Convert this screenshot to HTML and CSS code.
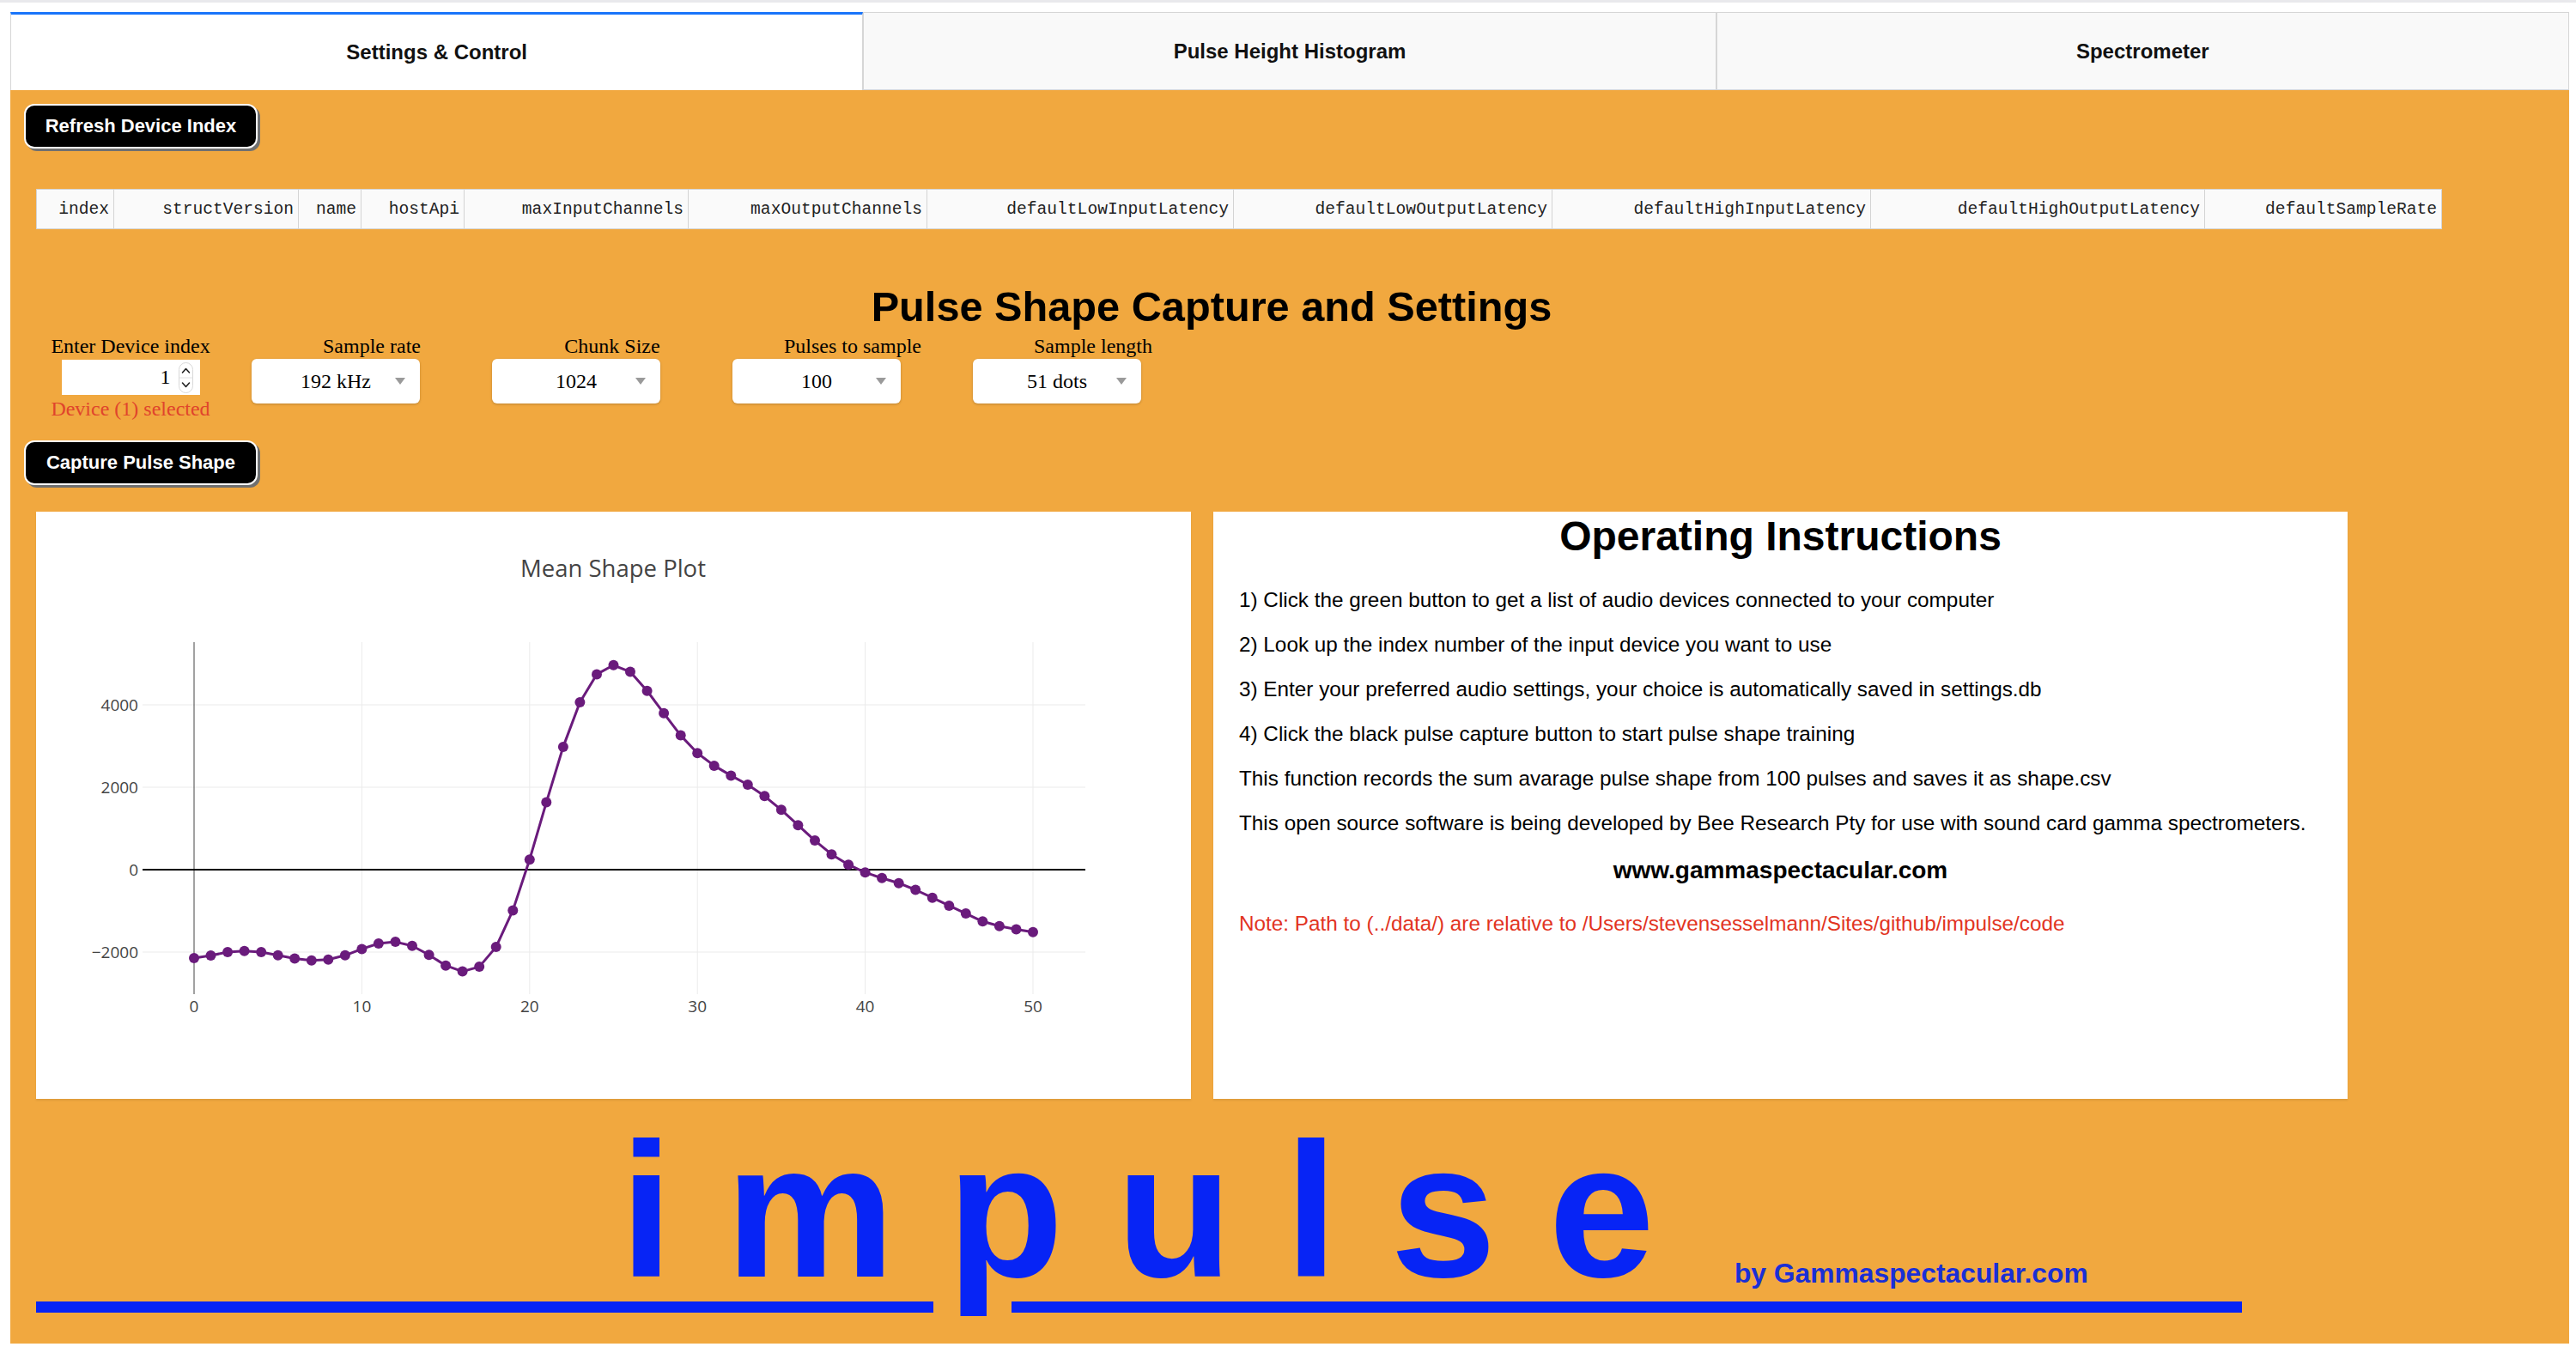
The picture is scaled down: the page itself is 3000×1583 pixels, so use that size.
FILE: index.html
```html
<!DOCTYPE html>
<html lang="en">
<head>
  <meta charset="UTF-8" />
  <meta name="viewport" content="width=device-width, initial-scale=1.0"/>
  <title>impulse</title>
  <link rel="stylesheet" href="styles.css">
</head>
<body>

  <!-- Tabs -->
  <div class="tabs">
    <div class="tab active">Settings &amp; Control</div>
    <div class="tab">Pulse Height Histogram</div>
    <div class="tab">Spectrometer</div>
  </div>

  <div class="tab-content">
    <button class="btn">Refresh Device Index</button>

    <!-- Device table -->
    <table class="device-table">
      <tr>
        <th class="c-index">index</th>
        <th class="c-struct">structVersion</th>
        <th class="c-name">name</th>
        <th class="c-host">hostApi</th>
        <th class="c-maxin">maxInputChannels</th>
        <th class="c-maxout">maxOutputChannels</th>
        <th class="c-lowin">defaultLowInputLatency</th>
        <th class="c-lowout">defaultLowOutputLatency</th>
        <th class="c-highin">defaultHighInputLatency</th>
        <th class="c-highout">defaultHighOutputLatency</th>
        <th class="c-rate">defaultSampleRate</th>
      </tr>
    </table>

    <h1 class="section-title">Pulse Shape Capture and Settings</h1>

    <!-- Settings -->
    <div class="controls">
      <div class="control first">
        <label>Enter Device index</label>
        <div class="number-box">
          <span>1</span>
          <svg class="spinner" width="17" height="36" viewBox="0 0 17 36">
            <rect x="0.5" y="0.5" width="16" height="35" rx="8" fill="#fff" stroke="#d8d8d8"/>
            <line x1="1" y1="18" x2="16" y2="18" stroke="#e2e2e2"/>
            <polyline points="4.5,12 8.5,7.5 12.5,12" fill="none" stroke="#222" stroke-width="1.6" stroke-linecap="round" stroke-linejoin="round"/>
            <polyline points="4.5,24 8.5,28.5 12.5,24" fill="none" stroke="#222" stroke-width="1.6" stroke-linecap="round" stroke-linejoin="round"/>
          </svg>
        </div>
        <div class="device-msg">Device (1) selected</div>
      </div>
      <div class="control">
        <label>Sample rate</label>
        <div class="dropdown"><span>192 kHz</span><span class="arrow"></span></div>
      </div>
      <div class="control">
        <label>Chunk Size</label>
        <div class="dropdown"><span>1024</span><span class="arrow"></span></div>
      </div>
      <div class="control">
        <label>Pulses to sample</label>
        <div class="dropdown"><span>100</span><span class="arrow"></span></div>
      </div>
      <div class="control">
        <label>Sample length</label>
        <div class="dropdown"><span>51 dots</span><span class="arrow"></span></div>
      </div>
    </div>

    <button class="btn capture">Capture Pulse Shape</button>

    <div class="panels">
      <!-- Mean shape plot -->
      <div class="panel chart-panel">
        <svg class="chart" width="1345" height="684" viewBox="0 0 1345 684">
          <text class="chart-title" x="672" y="76" text-anchor="middle">Mean Shape Plot</text>

          <g stroke="#ebebeb" stroke-width="1">
            <line x1="379.4" y1="152" x2="379.4" y2="562"/>
            <line x1="574.8" y1="152" x2="574.8" y2="562"/>
            <line x1="770.2" y1="152" x2="770.2" y2="562"/>
            <line x1="965.6" y1="152" x2="965.6" y2="562"/>
            <line x1="1161" y1="152" x2="1161" y2="562"/>
            <line x1="124" y1="225" x2="1222" y2="225"/>
            <line x1="124" y1="321" x2="1222" y2="321"/>
            <line x1="124" y1="513" x2="1222" y2="513"/>
          </g>
          <line x1="184" y1="152" x2="184" y2="562" stroke="#444" stroke-width="1"/>
          <line x1="124" y1="417" x2="1222" y2="417" stroke="#000" stroke-width="2"/>

          <g class="tick" text-anchor="end">
            <text x="119" y="232">4000</text>
            <text x="119" y="328">2000</text>
            <text x="119" y="424">0</text>
            <text x="119" y="520">−2000</text>
          </g>
          <g class="tick" text-anchor="middle">
            <text x="184" y="583">0</text>
            <text x="379.4" y="583">10</text>
            <text x="574.8" y="583">20</text>
            <text x="770.2" y="583">30</text>
            <text x="965.6" y="583">40</text>
            <text x="1161" y="583">50</text>
          </g>

          <polyline fill="none" stroke="#6a1b7c" stroke-width="3" stroke-linejoin="round"
            points="184,520 203.5,517 223.1,513 242.6,511.7 262.2,513 281.7,516.8 301.2,520.4 320.8,522.7 340.3,521.8 359.9,516.8 379.4,509.4 398.9,503 418.5,501.1 438,505.7 457.6,516.3 477.1,528.7 496.6,535.6 516.2,530.1 535.7,507.1 555.3,464.4 574.8,405.2 594.3,338.6 613.9,273.9 633.4,222 653,189.4 672.5,178.8 692,186.6 711.6,208.7 731.1,234.8 750.7,260.6 770.2,281.2 789.7,295.9 809.3,307.4 828.8,318 848.4,331.3 867.9,347.3 887.4,365.2 907,383.1 926.5,399.2 946.1,411.2 965.6,420.3 985.1,426.8 1004.7,432.7 1024.2,440.5 1043.8,449.7 1063.3,458.9 1082.8,468.1 1102.4,477.3 1121.9,482.8 1141.5,486.5 1161,489.7"/>

          <g fill="#6a1b7c">
            <circle cx="184" cy="520" r="6"/><circle cx="203.5" cy="517" r="6"/><circle cx="223.1" cy="513" r="6"/>
            <circle cx="242.6" cy="511.7" r="6"/><circle cx="262.2" cy="513" r="6"/><circle cx="281.7" cy="516.8" r="6"/>
            <circle cx="301.2" cy="520.4" r="6"/><circle cx="320.8" cy="522.7" r="6"/><circle cx="340.3" cy="521.8" r="6"/>
            <circle cx="359.9" cy="516.8" r="6"/><circle cx="379.4" cy="509.4" r="6"/><circle cx="398.9" cy="503" r="6"/>
            <circle cx="418.5" cy="501.1" r="6"/><circle cx="438" cy="505.7" r="6"/><circle cx="457.6" cy="516.3" r="6"/>
            <circle cx="477.1" cy="528.7" r="6"/><circle cx="496.6" cy="535.6" r="6"/><circle cx="516.2" cy="530.1" r="6"/>
            <circle cx="535.7" cy="507.1" r="6"/><circle cx="555.3" cy="464.4" r="6"/><circle cx="574.8" cy="405.2" r="6"/>
            <circle cx="594.3" cy="338.6" r="6"/><circle cx="613.9" cy="273.9" r="6"/><circle cx="633.4" cy="222" r="6"/>
            <circle cx="653" cy="189.4" r="6"/><circle cx="672.5" cy="178.8" r="6"/><circle cx="692" cy="186.6" r="6"/>
            <circle cx="711.6" cy="208.7" r="6"/><circle cx="731.1" cy="234.8" r="6"/><circle cx="750.7" cy="260.6" r="6"/>
            <circle cx="770.2" cy="281.2" r="6"/><circle cx="789.7" cy="295.9" r="6"/><circle cx="809.3" cy="307.4" r="6"/>
            <circle cx="828.8" cy="318" r="6"/><circle cx="848.4" cy="331.3" r="6"/><circle cx="867.9" cy="347.3" r="6"/>
            <circle cx="887.4" cy="365.2" r="6"/><circle cx="907" cy="383.1" r="6"/><circle cx="926.5" cy="399.2" r="6"/>
            <circle cx="946.1" cy="411.2" r="6"/><circle cx="965.6" cy="420.3" r="6"/><circle cx="985.1" cy="426.8" r="6"/>
            <circle cx="1004.7" cy="432.7" r="6"/><circle cx="1024.2" cy="440.5" r="6"/><circle cx="1043.8" cy="449.7" r="6"/>
            <circle cx="1063.3" cy="458.9" r="6"/><circle cx="1082.8" cy="468.1" r="6"/><circle cx="1102.4" cy="477.3" r="6"/>
            <circle cx="1121.9" cy="482.8" r="6"/><circle cx="1141.5" cy="486.5" r="6"/><circle cx="1161" cy="489.7" r="6"/>
          </g>
        </svg>
      </div>

      <!-- Instructions -->
      <div class="panel info-panel">
        <h2>Operating Instructions</h2>
        <p>1) Click the green button to get a list of audio devices connected to your computer</p>
        <p>2) Look up the index number of the input device you want to use</p>
        <p>3) Enter your preferred audio settings, your choice is automatically saved in settings.db</p>
        <p>4) Click the black pulse capture button to start pulse shape training</p>
        <p>This function records the sum avarage pulse shape from 100 pulses and saves it as shape.csv</p>
        <p>This open source software is being developed by Bee Research Pty for use with sound card gamma spectrometers.</p>
        <p class="site">www.gammaspectacular.com</p>
        <p class="note">Note: Path to (../data/) are relative to /Users/stevensesselmann/Sites/github/impulse/code</p>
      </div>
    </div>

    <!-- Logo -->
    <div class="logo">
      <div class="logo-word">impulse<span class="logo-by">by Gammaspectacular.com</span></div>
      <div class="logo-rule"><span class="rule-left"></span><span class="rule-right"></span></div>
    </div>
  </div>

</body>
</html>
```

FILE: styles.css
```css
:root {
  --orange: #f1a83f;
  --logo-blue: #0724f5;
  --tab-border: #d6d6d6;
  --red: #e2341f;
}

* {
  box-sizing: border-box;
}

body {
  margin: 0;
  padding: 11px 8px 0 12px;
  border-top: 3px solid #e9e9ec;
  background: #fff;
  color: #000;
  font-family: 'Liberation Sans', Arial, sans-serif;
}

/* Tabs */
.tabs {
  display: flex;
  height: 91px;
}

.tab {
  flex: 1;
  display: flex;
  align-items: center;
  justify-content: center;
  background: #f9f9f9;
  border: 1px solid var(--tab-border);
  font-size: 24px;
  font-weight: bold;
  color: #111;
}

.tab.active {
  background: #fff;
  border-top: 3px solid #1975fa;
  border-bottom: none;
}

.tab-content {
  background: var(--orange);
  padding: 16px 0 36px 16px;
}

/* Buttons */
.btn {
  display: block;
  width: 272px;
  height: 52px;
  padding: 0;
  background: #000;
  color: #fff;
  border: 2px solid #fff;
  border-radius: 12px;
  box-shadow: 3px 3px 0 #707070;
  font-family: 'Liberation Sans', Arial, sans-serif;
  font-size: 22px;
  font-weight: bold;
  cursor: pointer;
}

.btn.capture {
  margin-top: 25px;
}

/* Device table */
.device-table {
  margin: 47px 0 0 14px;
  width: 2801px;
  table-layout: fixed;
  border-collapse: collapse;
  background: #fafafa;
}

.device-table th {
  height: 46px;
  padding: 0 5px 0 0;
  border: 1px solid #d4d4d4;
  text-align: right;
  font-family: 'Liberation Mono', 'Courier New', monospace;
  font-size: 19.6px;
  font-weight: normal;
  color: #222;
}

.c-index { width: 90px; }
.c-struct { width: 215px; }
.c-name { width: 73px; }
.c-host { width: 120px; }
.c-maxin { width: 261px; }
.c-maxout { width: 278px; }
.c-lowin { width: 357px; }
.c-lowout { width: 371px; }
.c-highin { width: 371px; }
.c-highout { width: 389px; }
.c-rate { width: 276px; }

.section-title {
  width: 2766px;
  margin: 66px 0 0;
  text-align: center;
  font-size: 48.7px;
  line-height: 48px;
  font-weight: bold;
}

/* Settings row */
.controls {
  display: flex;
  align-items: flex-start;
  margin-top: 10px;
}

.control {
  width: 280px;
  display: flex;
  flex-direction: column;
  align-items: flex-start;
  font-family: 'Liberation Serif', 'Times New Roman', serif;
  font-size: 24px;
}

.control.first {
  width: 248px;
  margin-right: 17px;
  align-items: center;
}

.control label {
  width: 100%;
  text-align: center;
  line-height: 24px;
}

.dropdown {
  position: relative;
  width: 196px;
  height: 52px;
  margin-top: 3px;
  display: flex;
  align-items: center;
  justify-content: center;
  background: #fff;
  border-radius: 6px;
  box-shadow: 0 1px 3px rgba(0, 0, 0, 0.22);
}

.arrow {
  position: absolute;
  right: 17px;
  top: 22px;
  border-left: 6px solid transparent;
  border-right: 6px solid transparent;
  border-top: 8px solid #9a9a9a;
}

.number-box {
  width: 161px;
  height: 41px;
  margin-top: 4px;
  padding-right: 8px;
  display: flex;
  align-items: center;
  justify-content: flex-end;
  gap: 9px;
  background: #fff;
}

.device-msg {
  margin-top: 4px;
  line-height: 24px;
  color: #e0442c;
}

/* Panels */
.panels {
  display: flex;
  gap: 26px;
  margin: 31px 0 0 14px;
}

.panel {
  height: 684px;
  background: #fff;
  box-shadow: 0 2px 2px rgba(0, 0, 0, 0.08);
}

.chart-panel {
  width: 1345px;
}

.chart {
  display: block;
  font-family: 'Open Sans', Verdana, sans-serif;
}

.chart-title {
  font-size: 27.5px;
  fill: #444;
}

.tick text {
  font-size: 19px;
  fill: #444;
}

.info-panel {
  width: 1321px;
  padding: 5px 30px 0;
}

.info-panel h2 {
  margin: 0 0 37px;
  text-align: center;
  font-size: 48px;
  line-height: 48px;
}

.info-panel p {
  margin: 0 0 26px;
  font-size: 24.3px;
  line-height: 26px;
}

.info-panel .site {
  margin-bottom: 33px;
  text-align: center;
  font-size: 28px;
  line-height: 32px;
  font-weight: bold;
}

.info-panel .note {
  color: var(--red);
}

/* Logo */
.logo {
  margin-top: 30px;
  color: var(--logo-blue);
}

.logo-word {
  padding-left: 694px;
  white-space: nowrap;
  font-size: 222px;
  line-height: 200px;
  font-weight: bold;
  letter-spacing: 61px;
}

.logo-by {
  margin-left: 32px;
  vertical-align: -7px;
  font-size: 31.8px;
  line-height: 31px;
  letter-spacing: 0;
  color: #1a2fd6;
}

.logo-rule {
  display: flex;
  height: 13px;
  margin: 6px 0 0 14px;
}

.rule-left,
.rule-right {
  background: var(--logo-blue);
}

.rule-left {
  width: 1045px;
}

.rule-right {
  width: 1433px;
  margin-left: 91px;
}
```
